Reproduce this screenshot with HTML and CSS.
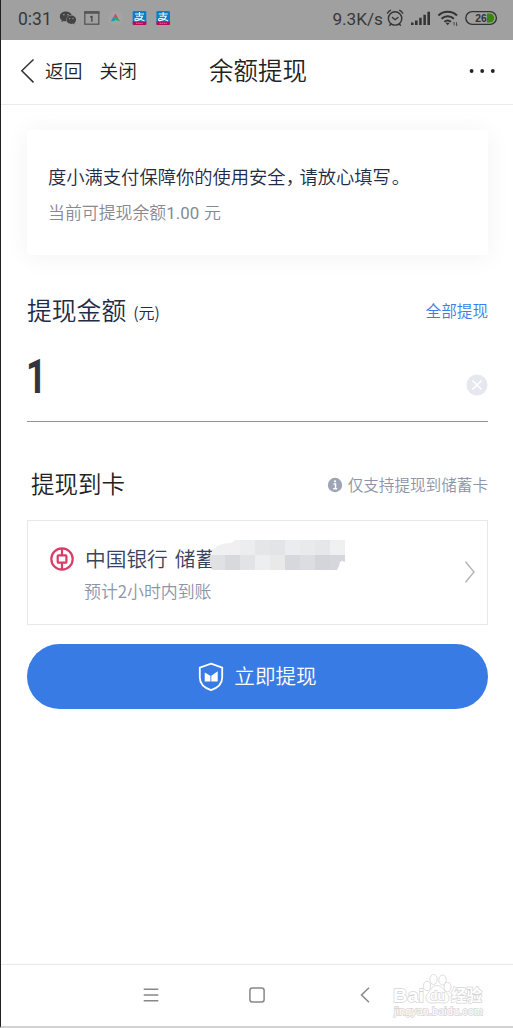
FILE: index.html
```
<!DOCTYPE html>
<html lang="zh-CN">
<head>
<meta charset="utf-8">
<title>余额提现</title>
<link rel="stylesheet" href="styles.css">
</head>
<body>
<div class="phone">
  <header class="status">
    <span class="clock">0:31</span>
    <svg class="status-left" width="112" height="20" viewBox="59 8 112 20">
      <path d="M66 11.500c-3.700 0-6.200 2.200-6.200 5 0 1.600.8 2.900 2.100 3.800l-.6 2 2.300-1.200c.9.300 1.800.3 2.800.2-.9-4.200 2.200-6.500 5.300-6.400-.7-2.100-3-3.400-5.700-3.400z" fill="#444"/>
      <path d="M71.300 15.500c-2.700 0-4.800 1.800-4.800 4.200s2.200 4.200 4.800 4.200c.6 0 1.200-.1 1.700-.3l1.800 1-.5-1.600c1.100-.8 1.800-1.900 1.800-3.300 0-2.400-2.200-4.200-4.800-4.200z" fill="#444"/>
      <g fill="#a0a0a0"><circle cx="63.900" cy="14.800" r=".8"/><circle cx="68" cy="14.800" r=".8"/><circle cx="69.700" cy="18.600" r=".7"/><circle cx="73" cy="18.600" r=".7"/></g>
      <rect x="84.800" y="12" width="14" height="12.200" fill="none" stroke="#555" stroke-width="1.300"/>
      <path d="M84.200 12.500h15.200" stroke="#555" stroke-width="2.500"/>
      <path d="M90.200 17.200l1.700-.8v5.400" fill="none" stroke="#444" stroke-width="1.300"/>
      <circle cx="115.500" cy="18" r="7.300" fill="#a4a4a4"/>
      <path d="M115.500 13.500l-2.400 4.200h4.800z" fill="#d8435d"/><path d="M113.300 17l-2.500 4.200 3.800-.3 1.500-2.300z" fill="#199ab8"/><path d="M117.200 17l2.700 4.200-3.600-1-1.200-2.200z" fill="#34a15b"/>
      <g id="pay"><rect x="132.700" y="11" width="13.600" height="14" rx="1.200" fill="#087fc6"/><path d="M132.700 21.500h13.600V24a1 1 0 0 1-1 1h-11.600a1 1 0 0 1-1-1z" fill="#b40b60"/><path d="M135 14h9M139.500 12v4M136 16.300h6.500c-.8 2.200-3 4.200-6.300 4.300-2 0-1.700-2.300.3-2.200 2.200 0 4.500 1.500 8 2.500" fill="none" stroke="#e8f6ff" stroke-width="1.100"/><path d="M136 23.300h7" stroke="#d875a3" stroke-width="1" stroke-dasharray="1.500 .6"/></g>
      <use href="#pay" x="23.700"/>
    </svg>
    <span class="speed">9.3K/s</span>
    <svg class="status-right" width="112" height="22" viewBox="386 7 112 22">
      <g fill="none" stroke="#333" stroke-width="1.400" stroke-linecap="round"><circle cx="395.100" cy="18.400" r="6.700"/><path d="M392.400 17.500l2.700 2.200 2.900-2.200M387.500 13.200c.7-1.400 1.700-2.300 3-2.900M402.700 13.200c-.7-1.400-1.700-2.300-3-2.900M390.800 24.200l-1 1M399.400 24.200l1 1"/></g>
      <path d="M411 22.500h2.600v2.500H411zM415 20.400h2.600V25H415zM419.200 17.700h2.500V25h-2.500zM423.400 14.700h2.500V25h-2.500zM427.400 11.700h2.600V25h-2.600z" fill="#333"/>
      <g fill="none" stroke="#333" stroke-width="2"><path d="M438.400 15.500c5.200-5 13.400-5 18.600 0M441.500 18.800c3.600-3.300 8.900-3.300 12.400 0M444.400 21.800c2.100-1.700 4.500-1.700 6.600 0"/></g>
      <path d="M445.500 22.700h4.300l-2.100 2.600z" fill="#333"/><path d="M454.200 25.500V22.200l-1 1M456.500 22.200v3.500l1-1" fill="none" stroke="#444" stroke-width=".9"/>
      <rect x="465.800" y="11.600" width="30.600" height="12.800" rx="6.400" fill="none" stroke="#333" stroke-width="1.400"/>
      <path d="M487 13.500h2.700a4.500 4.500 0 0 1 0 9H487z" fill="#39880c"/>
      <text class="battery" x="475.200" y="22" textLength="11.600" lengthAdjust="spacingAndGlyphs">26</text>
    </svg>
  </header>

  <nav class="nav">
    <svg class="back" width="16" height="26" viewBox="0 0 16 26"><path d="M13.500 1.500L1.800 12.800l11.700 11.600" fill="none" stroke="#333" stroke-width="1.500"/></svg>
    <span class="nav-link">返回</span>
    <span class="nav-link">关闭</span>
    <h1 class="title">余额提现</h1>
    <svg class="more" width="28" height="6" viewBox="0 0 28 6"><g fill="#222"><circle cx="3.600" cy="3" r="1.900"/><circle cx="14.200" cy="3" r="1.900"/><circle cx="24.800" cy="3" r="1.900"/></g></svg>
  </nav>

  <main class="content">
    <section class="notice">
      <p class="notice-title">度小满支付保障你的使用安全<span class="comma">，</span>请放心填写<span class="stop">。</span></p>
      <p class="notice-balance">当前可提现余额<span class="money">1.00</span> 元</p>
    </section>

    <div class="amount-head">
      <h2 class="amount-label">提现金额</h2><span class="unit">(元)</span>
      <a class="all">全部提现</a>
    </div>
    <div class="amount-row">
      <span class="amount">1</span>
      <svg class="clear" width="22" height="22" viewBox="0 0 22 22"><circle cx="11" cy="11" r="10.500" fill="#e5e8ef"/><path d="M6.500 6.500l9 9m0-9l-9 9" stroke="#fff" stroke-width="1.500"/></svg>
    </div>

    <div class="card-head">
      <h2 class="card-label">提现到卡</h2>
      <svg class="info" width="16" height="16" viewBox="0 0 16 16"><circle cx="8" cy="8" r="7.200" fill="#9da4b5"/><path d="M6.500 7h2v4.200M6.200 11.700h4" fill="none" stroke="#fff" stroke-width="1.500"/><circle cx="8" cy="4.300" r="1.100" fill="#fff"/></svg>
      <span class="hint">仅支持提现到储蓄卡</span>
    </div>

    <section class="bank">
      <svg class="bank-logo" width="24" height="24" viewBox="0 0 24 24"><g fill="none" stroke="#d83d66"><circle cx="12" cy="12" r="10.700" stroke-width="2.200"/><rect x="7.700" y="8.300" width="8.700" height="7.400" rx=".8" stroke-width="2.200"/><path d="M12 1v7.500M12 15.500V23" stroke-width="2.200"/></g></svg>
      <div class="bank-text">
        <div class="bank-line">
          <span class="bank-name">中国银行</span><span class="bank-type">储蓄</span>
          <svg class="mask" width="136" height="32" viewBox="210 539 136 32" shape-rendering="crispEdges">
            <clipPath id="blur-shape"><path d="M210 558c0-5 3-9 7-12 4-2 9-3 14-3l4-3h110v22l-3-1-2 1-1 4-2 4H213l-3-5z"/></clipPath>
            <g clip-path="url(#blur-shape)">
              <path d="M210 540h30v15h-30z" fill="#f0f0f2"/><path d="M240 540h15v15h-15z" fill="#ebedef"/><path d="M255 540h15v15h-15z" fill="#e5e6e8"/><path d="M270 540h15v15h-15z" fill="#e3e4e8"/><path d="M285 540h15v15h-15z" fill="#eaecef"/><path d="M300 540h15v15h-15z" fill="#e9eaec"/><path d="M315 540h15v15h-15z" fill="#e6e7e9"/><path d="M330 540h15v15h-15z" fill="#eff0f2"/>
              <path d="M210 555h15v15h-15z" fill="#e0e1e5"/><path d="M225 555h15v15h-15z" fill="#d8d9dd"/><path d="M240 555h15v15h-15z" fill="#e2e3e7"/><path d="M255 555h15v15h-15z" fill="#edeef0"/><path d="M270 555h15v15h-15z" fill="#e9e9ea"/><path d="M285 555h15v15h-15z" fill="#d7d8dd"/><path d="M300 555h15v15h-15z" fill="#dcdde1"/><path d="M315 555h15v15h-15z" fill="#d4d5da"/><path d="M330 555h15v15h-15z" fill="#d6d7dc"/>
            </g>
          </svg>
        </div>
        <div class="eta">预计2小时内到账</div>
      </div>
      <svg class="chevron" width="12" height="24" viewBox="0 0 12 24"><path d="M1.500 1.800L10 12 1.500 22.200" fill="none" stroke="#b5b5b5" stroke-width="1.400"/></svg>
    </section>

    <button class="submit">
      <svg width="26" height="30" viewBox="0 0 26 30"><path d="M13 1.700l11.200 4v9.800c0 6.500-4.600 10.400-11.200 12.700C6.400 25.900 1.800 22 1.800 15.500V5.700z" fill="none" stroke="#fff" stroke-width="1.800"/><path d="M6.700 10.500l5.700 3.200v5.800H6.700zM13.300 13.700l6.400-4.400v10.200h-6.400z" fill="#fff"/></svg>
      <span class="submit-label">立即提现</span>
    </button>
  </main>

  <footer class="system">
    <svg width="16" height="16" viewBox="0 0 16 16"><path d="M.7 2.300h14.600M.7 8h14.600M.7 13.700h14.600" stroke="#888" stroke-width="1.400"/></svg>
    <svg width="16" height="16" viewBox="0 0 16 16"><rect x=".9" y=".9" width="14.200" height="14.200" rx="2.500" fill="none" stroke="#888" stroke-width="1.500"/></svg>
    <svg width="10" height="16" viewBox="0 0 10 16"><path d="M9 .8L1.500 8 9 15.200" fill="none" stroke="#888" stroke-width="1.500"/></svg>
    <svg class="watermark" width="96" height="48" viewBox="390 970 96 48">
      <g fill="#fff" stroke="#dedede" stroke-width="1">
        <ellipse cx="433.500" cy="978.500" rx="3.700" ry="5"/><ellipse cx="442.500" cy="979" rx="3.700" ry="5"/><ellipse cx="427" cy="985" rx="3.500" ry="4.600"/><ellipse cx="447.500" cy="986" rx="3.500" ry="4.600"/>
        <path d="M437 984.500c-5 0-6 4.500-9 7.500-4 4-2 10 3 10 4 0 8-.5 12 0 6 .5 8-5 4-9.500-3-3-5-8-10-8z"/>
      </g>
      <text class="wm-main" x="393" y="1000.500" textLength="31" lengthAdjust="spacingAndGlyphs">Bai</text>
      <text class="wm-du" x="430" y="999" textLength="15" lengthAdjust="spacingAndGlyphs">du</text>
      <text class="wm-cn" x="451" y="1000" textLength="31" lengthAdjust="spacingAndGlyphs">经验</text>
      <text class="wm-url" x="394" y="1013.500" textLength="89" lengthAdjust="spacingAndGlyphs">jingyan.baidu.com</text>
    </svg>
  </footer>
</div>
</body>
</html>
```
FILE: styles.css
```
* { box-sizing: border-box; }
body, h1, h2, p { margin: 0; }
h1, h2 { font-weight: inherit; }
svg { flex: none; display: block; }

body {
  background: #fff;
  font-family: "Noto Sans CJK SC", sans-serif;
  font-weight: 350;
}
.phone {
  width: 513px;
  height: 1028px;
  display: flex;
  flex-direction: column;
  border-left: 1px solid #202022;
  border-bottom: 2px solid #d2d2d2;
  overflow: hidden;
  white-space: nowrap;
}

.status {
  height: 40px;
  flex: none;
  display: flex;
  align-items: center;
  padding: 0 15px 4px 17px;
  background: #a0a0a0;
  color: #383838;
  font-family: Roboto, sans-serif;
  font-weight: 400;
}
.clock { width: 41px; font-size: 17.500px; padding-top: 1px; }
.speed { margin-left: auto; margin-right: 3px; font-size: 17.200px; padding-top: 1px; }
.battery { font: 700 10.500px "Liberation Sans", sans-serif; fill: #333; }

.nav {
  height: 65px;
  flex: none;
  display: flex;
  align-items: center;
  padding: 0 17px 3px 19px;
  border-bottom: 1px solid #ebebeb;
  color: #222;
}
.back { margin-right: 9px; }
.nav-link { width: 54.500px; padding-bottom: 2px; font-size: 18.700px; }
.title { margin-left: 55px; padding-bottom: 2px; font-size: 24.500px; }
.more { margin-left: auto; }

.content { flex: 1; padding: 25px 25px 0 26px; }

.notice {
  height: 125px;
  padding: 32px 21px 0;
  border-radius: 4px;
  background: #fff;
  box-shadow: 0 2px 26px rgba(0, 0, 0, .055);
}
.notice-title { height: 28px; line-height: 28px; font-size: 18.300px; color: #222b45; }
.comma { letter-spacing: -4.500px; }
.stop { margin-left: 1px; }
.notice-balance { margin-top: 8px; line-height: 28px; font-size: 16.900px; color: #858992; }
.money { margin-right: 1px; font-family: Roboto, sans-serif; font-weight: 400; font-size: 16.900px; }

.amount-head { height: 38px; margin-top: 35px; display: flex; line-height: 38px; color: #222b45; }
.amount-label { font-size: 24.800px; }
.unit { margin-left: 7px; padding-top: 3px; font-size: 16px; }
.all { margin-left: auto; padding-top: 1px; font-size: 15.600px; color: #3a7ce8; }
.amount-row {
  height: 94px;
  display: flex;
  justify-content: space-between;
  border-bottom: 1px solid #8c93a8;
}
.amount {
  margin-left: -1px;
  padding-top: 21px;
  line-height: 56px;
  font-family: Roboto, sans-serif;
  font-size: 48px;
  font-weight: 700;
  color: #34343f;
  transform: scaleX(.74);
  transform-origin: left;
}
.clear { margin-top: 46px; }

.card-head { height: 36px; margin-top: 43px; padding-left: 4px; display: flex; align-items: center; }
.card-label { font-size: 23.500px; color: #222; }
.info { margin-left: auto; margin-right: 5px; margin-top: 3px; }
.hint { padding-top: 1px; font-size: 15.600px; color: #8b94a8; }

.bank {
  height: 105px;
  margin-top: 19px;
  padding: 0 11px 0 22px;
  display: flex;
  border: 1px solid #e8e8e8;
}
.bank-logo { margin-top: 26px; }
.bank-text { margin: 17px auto 0 10px; }
.bank-line { height: 40px; padding-left: 1px; display: flex; align-items: center; color: #38435e; font-size: 20.700px; }
.bank-type { margin-left: 7px; }
.mask { margin: -6px 0 0 -6px; }
.eta { line-height: 26px; font-size: 16.900px; color: #8b94a8; }
.chevron { margin-top: 39px; }

.submit {
  width: 100%;
  height: 65px;
  margin-top: 19px;
  padding: 0;
  display: flex;
  justify-content: center;
  align-items: center;
  gap: 10px;
  border: 0;
  border-radius: 33px;
  background: #397be5;
  color: #fff;
  font: inherit;
  font-size: 20.600px;
}
.submit-label { padding-bottom: 3px; }

.system {
  height: 62px;
  flex: none;
  display: flex;
  align-items: center;
  padding: 0 0 2px 142px;
  border-top: 1px solid #e8e8e8;
}
.system svg + svg { margin-left: 90px; }
.system svg + svg + svg { margin-left: 95px; }
.system .watermark.watermark.watermark { margin-left: 20px; }
.watermark text { fill: #fff; stroke: #d4d4d4; stroke-width: 1.300px; paint-order: stroke; }
.wm-main { font: 700 19px "Liberation Sans", sans-serif; }
.wm-du { font: 700 13px "Liberation Sans", sans-serif; }
.wm-cn { font: 700 16px "Noto Sans CJK SC", sans-serif; }
.wm-url { font: 400 10px "Liberation Sans", sans-serif; }
```
